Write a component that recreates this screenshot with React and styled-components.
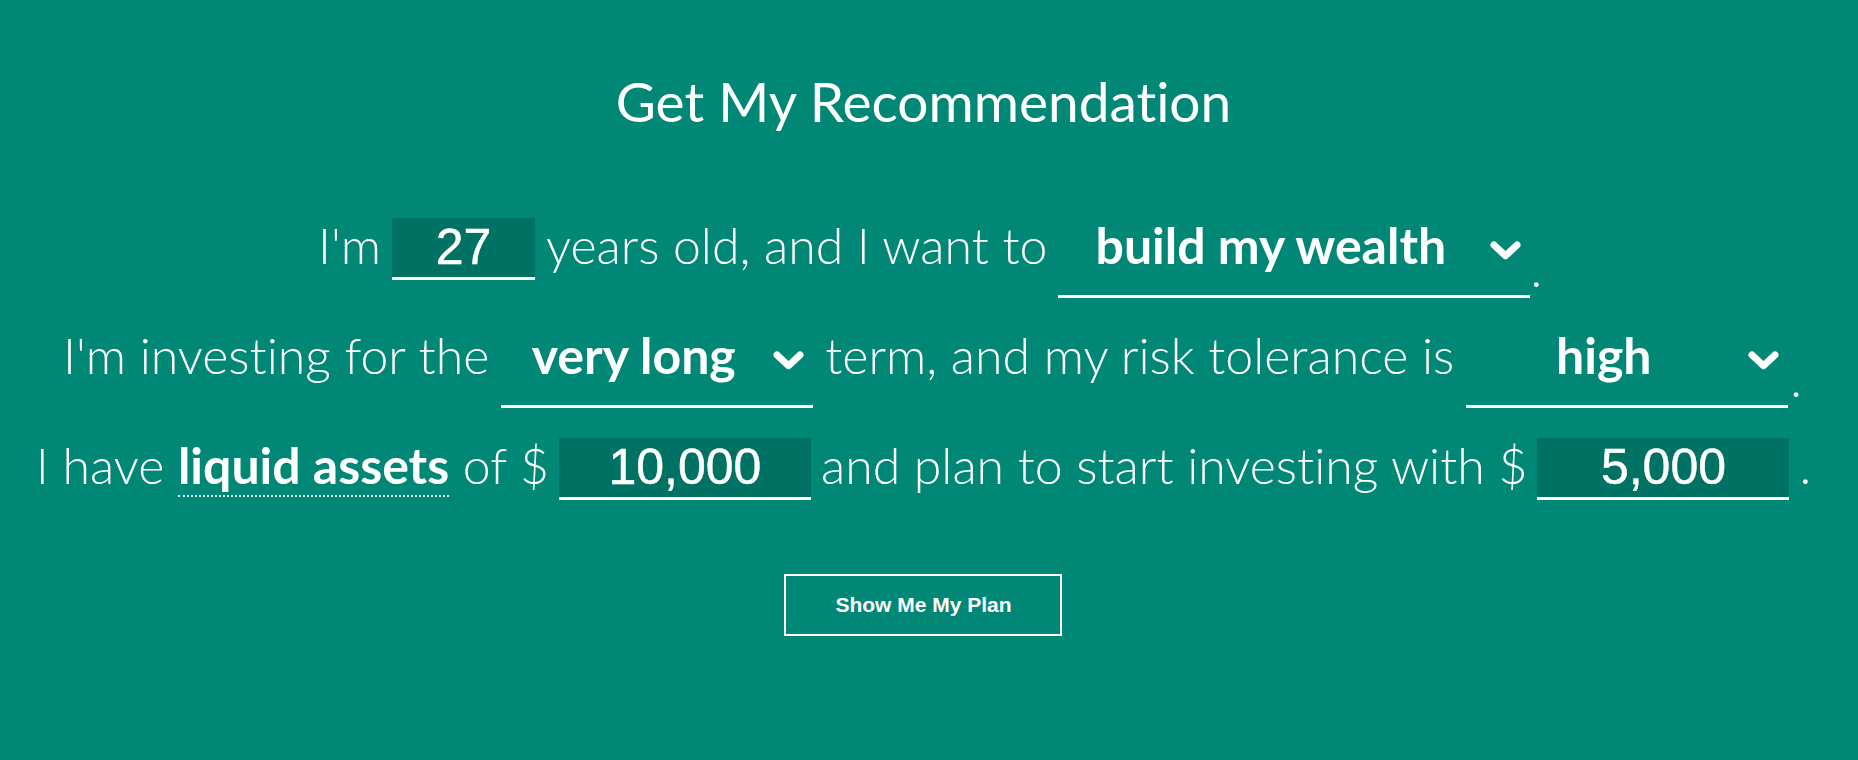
import React from "react";
import styled, { createGlobalStyle } from "styled-components";

const GlobalStyle = createGlobalStyle`
  html, body {
    margin: 0;
    padding: 0;
    background: #018776;
  }
  body {
    font-family: "Lato", "Open Sans", sans-serif;
    color: #ffffff;
    font-variant-ligatures: no-common-ligatures;
  }
`;

const Page = styled.main`
  min-height: 760px;
  box-sizing: border-box;
  padding: 69px 11px 0 0;
  display: flex;
  flex-direction: column;
  align-items: center;
`;

const Title = styled.h1`
  margin: 0;
  font-family: "Lato", sans-serif;
  font-weight: 400;
  font-size: 55px;
  line-height: 64px;
  color: #ffffff;
`;

const Form = styled.form`
  margin-top: 82px;
  display: flex;
  flex-direction: column;
  align-items: center;
`;

const Row = styled.div`
  height: 110px;
  display: flex;
  align-items: baseline;
  justify-content: center;
  column-gap: ${(p) => p.$gap || 11}px;
  padding-left: ${(p) => p.$indent || 0}px;
  white-space: nowrap;
`;

const Text = styled.span`
  font-family: "Lato", sans-serif;
  font-weight: 300;
  font-size: 50px;
  line-height: 60px;
  white-space: pre;
`;

const Term = styled.span`
  font-weight: 700;
  border-bottom: 2px dotted rgba(255, 255, 255, 0.85);
  cursor: help;
`;

const NumberInput = styled.input`
  width: ${(p) => p.$width}px;
  height: 62px;
  box-sizing: border-box;
  padding: 0;
  margin: 0;
  border: none;
  border-bottom: 3px solid #ffffff;
  border-radius: 0;
  background: #007264;
  color: #ffffff;
  font-family: "Liberation Sans", Arial, sans-serif;
  font-size: 50px;
  -webkit-text-stroke: 0.5px #ffffff;
  text-align: center;
  outline: none;
`;

const EndGroup = styled.span`
  display: flex;
  align-items: flex-end;
  column-gap: ${(p) => p.$gap || 0}px;
`;

const Dropdown = styled.div`
  width: ${(p) => p.$width}px;
  box-sizing: border-box;
  display: inline-flex;
  align-items: center;
  padding: 0 9px 20px 0;
  border-bottom: 3px solid #ffffff;
  cursor: pointer;
`;

const DropdownValue = styled.span`
  flex: 1;
  text-align: center;
  font-family: "Lato", sans-serif;
  font-weight: 700;
  font-size: 50px;
  line-height: 60px;
`;

const Chevron = styled.svg`
  width: 31px;
  height: 19px;
  margin: 11px 0 0 7px;
  flex: none;
`;

const Period = styled.span`
  font-family: "Lato", sans-serif;
  font-weight: 300;
  font-size: 50px;
  line-height: 60px;
`;

const PlanButton = styled.button`
  margin-top: 29px;
  width: 278px;
  height: 62px;
  box-sizing: border-box;
  border: 2px solid #ffffff;
  background: transparent;
  color: #ffffff;
  font-family: "Liberation Sans", Arial, sans-serif;
  font-weight: 700;
  font-size: 21px;
  cursor: pointer;
  align-self: center;
`;

const ChevronIcon = () => (
  <Chevron viewBox="0 0 31 19" aria-hidden="true">
    <polyline
      points="4,4 15.5,14.8 27,4"
      fill="none"
      stroke="#ffffff"
      strokeWidth="7"
      strokeLinecap="round"
      strokeLinejoin="round"
    />
  </Chevron>
);

const Select = ({ value, width }) => (
  <Dropdown $width={width} role="combobox" aria-expanded="false">
    <DropdownValue>{value}</DropdownValue>
    <ChevronIcon />
  </Dropdown>
);

export default function App() {
  return (
    <>
      <GlobalStyle />
      <Page>
        <Title>Get My Recommendation</Title>
        <Form onSubmit={(e) => e.preventDefault()}>
          <Row $indent={13}>
            <Text>I'm</Text>
            <NumberInput $width={143} defaultValue="27" aria-label="Age" />
            <Text>years old, and I want to</Text>
            <EndGroup>
              <Select value="build my wealth" width={472} />
              <Period>.</Period>
            </EndGroup>
          </Row>
          <Row $indent={18} $gap={12}>
            <Text>I'm investing for the</Text>
            <Select value="very long" width={312} />
            <Text>term, and my risk tolerance is</Text>
            <EndGroup $gap={2}>
              <Select value="high" width={322} />
              <Period>.</Period>
            </EndGroup>
          </Row>
          <Row $gap={10}>
            <Text>
              I have <Term>liquid assets</Term> of $
            </Text>
            <NumberInput $width={252} defaultValue="10,000" aria-label="Liquid assets" />
            <Text>and plan to start investing with $</Text>
            <NumberInput $width={252} defaultValue="5,000" aria-label="Initial investment" />
            <Text>.</Text>
          </Row>
          <PlanButton type="submit">Show Me My Plan</PlanButton>
        </Form>
      </Page>
    </>
  );
}
